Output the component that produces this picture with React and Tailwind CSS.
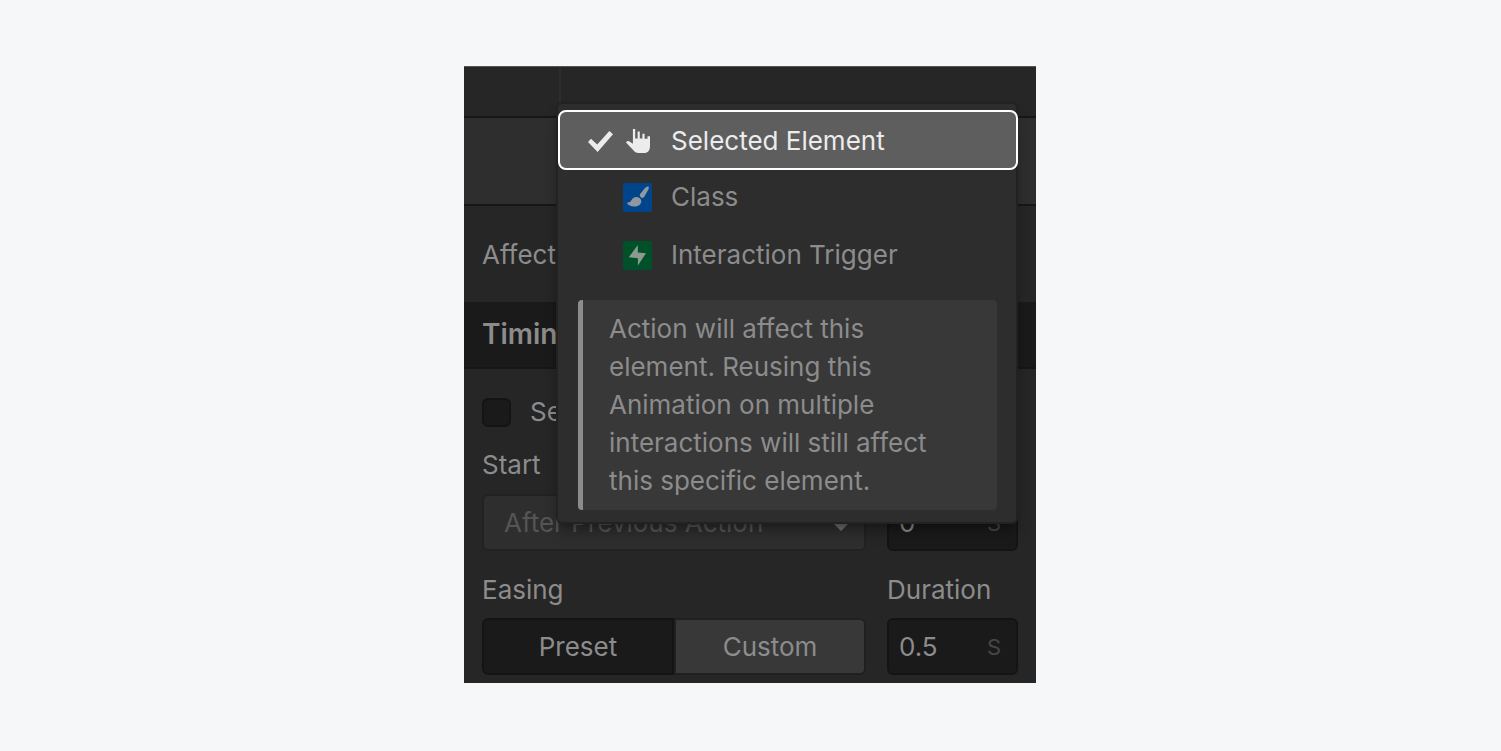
import React, { useState } from 'react';

const CheckIcon = () => (
  <svg viewBox="0 0 25 21" className="h-[21px] w-[25px]" fill="currentColor" aria-hidden="true">
    <path d="M0 11 3 7.8 9.2 13.6 21.4 0 25 3.2 9.6 21Z" />
  </svg>
);

const HandIcon = () => (
  <svg viewBox="0 0 24 24" className="size-6" fill="currentColor" aria-hidden="true">
    <path d="M6.9 0H9.2V9.4H11.6V2.6H13.8V9.4H16.4V4.8H18.6V9.8H21.5V7.2H24V17C24 21.5 21.8 24 18.2 24H12.6C10.6 24 9 23.2 7.8 21.8L0 13.4 1.4 12C2.2 11.8 3 12 3.6 12.4L6.9 14.8Z" />
  </svg>
);

const BrushIcon = () => (
  <svg viewBox="0 0 29 29" className="size-[29px] rounded-xs bg-[#00458c] text-[#8f979f]" fill="currentColor" aria-hidden="true">
    <path d="M25.6 3.6C24 3.6 22.6 4.2 21.8 5.2L17.3 10.8C16.6 11.8 16.6 12.8 17.2 13.5L18.4 14.7C19.5 15.3 20.6 14.9 21.3 13.8L25.2 6.8C25.8 5.7 26 4.6 25.6 3.6Z" />
    <path d="M3.8 19.8C6 19.8 7.2 19.2 8.2 17.6C9.6 15.1 11.6 14 13.8 14.1C16.4 14.2 18.4 16 18.3 18.4C18.1 21.4 15 23.5 11.4 23.6C8.2 23.7 5.2 22.4 3.8 19.8Z" />
  </svg>
);

const BoltIcon = () => (
  <svg viewBox="0 0 29 29" className="size-[29px] rounded-xs bg-[#00502a] text-[#8b9a91]" fill="currentColor" aria-hidden="true">
    <path d="M14.8 4V11.4L23 12.2 14.9 24.6V17.2L5.8 16.2Z" />
  </svg>
);

const targets = [
  { id: 'element', label: 'Selected Element', icon: <HandIcon /> },
  { id: 'class', label: 'Class', icon: <BrushIcon /> },
  { id: 'trigger', label: 'Interaction Trigger', icon: <BoltIcon /> },
];

const TargetMenu = ({ selected, onSelect }) => (
  <div className="absolute top-[35px] right-[18px] left-[92px] rounded-md border-2 border-[#222222] bg-[#2d2d2d] pt-[6px] pb-3 shadow-lg shadow-black/30">
    <div role="menu" className="-mr-[2px] flex flex-col">
      {targets.map((target) => {
        const active = target.id === selected;
        return (
          <button
            key={target.id}
            type="button"
            role="menuitemradio"
            aria-checked={active}
            onClick={() => onSelect(target.id)}
            className={`flex items-center rounded-lg border-2 pl-7 text-left ${
              active ? '-mb-[2px] h-[60px] border-white bg-[#5e5e5e] pt-[2px] text-[#ececec]' : 'h-[58px] border-transparent'
            }`}
          >
            <span className="w-[25px]">{active && <CheckIcon />}</span>
            <span className="ml-[10px] flex w-[29px] justify-center">{target.icon}</span>
            <span className="ml-[19px]">{target.label}</span>
          </button>
        );
      })}
    </div>
    <p className="mr-[19px] ml-5 mt-4 rounded-sm border-l-[5px] border-[#8c8c8c] bg-[#383838] py-[10px] pr-10 pl-[26px] leading-[38px]">
      Action will affect this element. Reusing this Animation on multiple interactions will still affect this specific element.
    </p>
  </div>
);

const NumberField = ({ id, label, value, onChange }) => (
  <div className="flex h-[57px] items-center rounded-md border-2 border-[#141414] bg-[#1a1a1a] pr-[15px] pl-[10px]">
    <input
      id={id}
      aria-label={label}
      value={value}
      onChange={(e) => onChange(e.target.value)}
      className="w-full min-w-0 bg-transparent outline-none"
    />
    <span className="text-[22px] text-[#464646]">S</span>
  </div>
);

const App = () => {
  const [selected, setSelected] = useState('element');
  const [initial, setInitial] = useState(false);
  const [delay, setDelay] = useState('0');
  const [duration, setDuration] = useState('0.5');
  const [easing, setEasing] = useState('Preset');

  return (
    <main className="min-h-screen bg-[#f5f7f9] py-[66px] pr-px font-['Inter',sans-serif] text-[26px] leading-8 text-[#8c8c8c] [font-optical-sizing:none]">
      <div className="relative mx-auto w-full max-w-[572px] border-t border-[#555555] bg-[#262626] pb-2">
        <div className="flex h-[51px] border-b-2 border-[#171717]">
          <div className="w-[97px] border-r-2 border-[#2d2d2d]" />
        </div>
        <div className="h-[88px] border-b-2 border-[#171717] bg-[#2e2e2e]" />
        <div className="flex h-24 items-center px-[18px] pt-[2px]">Affect</div>
        <h2 className="flex h-[67px] items-center border-b-2 border-[#161616] bg-[#1a1a1a] px-[18px] pb-[2px] text-[28px] font-semibold">
          Timing
        </h2>
        <div className="px-[18px] pt-[27px]">
          <label className="flex items-center gap-[19px]">
            <input
              type="checkbox"
              checked={initial}
              onChange={(e) => setInitial(e.target.checked)}
              className="size-[29px] appearance-none rounded-md border-2 border-[#141414] bg-[#1a1a1a] checked:bg-[#8c8c8c]"
            />
            Set
          </label>
          <div className="mt-[21px] grid grid-cols-[1fr_131px] gap-x-[21px]">
            <label htmlFor="start" className="col-span-2">Start</label>
            <div className="relative mt-[13px] text-[#555555]">
              <select
                id="start"
                className="h-[57px] w-full appearance-none rounded-md border-2 border-[#222222] bg-[#2e2e2e] pl-5 outline-none"
              >
                <option>After Previous Action</option>
                <option>With Previous Action</option>
              </select>
              <svg viewBox="0 0 16 8" className="pointer-events-none absolute top-[29px] right-[17px] h-2 w-4" fill="#707070" aria-hidden="true">
                <path d="M0 0H16L8 8Z" />
              </svg>
            </div>
            <div className="mt-[13px]">
              <NumberField id="delay" label="Delay" value={delay} onChange={setDelay} />
            </div>
            <span id="easing" className="mt-[23px]">Easing</span>
            <label htmlFor="duration" className="mt-[23px]">Duration</label>
            <div role="group" aria-labelledby="easing" className="mt-3 flex h-[57px] overflow-hidden rounded-md">
              {['Preset', 'Custom'].map((name) => (
                <button
                  key={name}
                  type="button"
                  aria-pressed={easing === name}
                  onClick={() => setEasing(name)}
                  className={`flex-1 border-2 first:rounded-l-md last:rounded-r-md ${
                    easing === name ? 'border-[#141414] bg-[#1a1a1a]' : 'border-[#202020] bg-[#383838]'
                  }`}
                >
                  {name}
                </button>
              ))}
            </div>
            <div className="mt-3">
              <NumberField id="duration" value={duration} onChange={setDuration} />
            </div>
          </div>
        </div>
        <TargetMenu selected={selected} onSelect={setSelected} />
      </div>
    </main>
  );
};

export default App;
